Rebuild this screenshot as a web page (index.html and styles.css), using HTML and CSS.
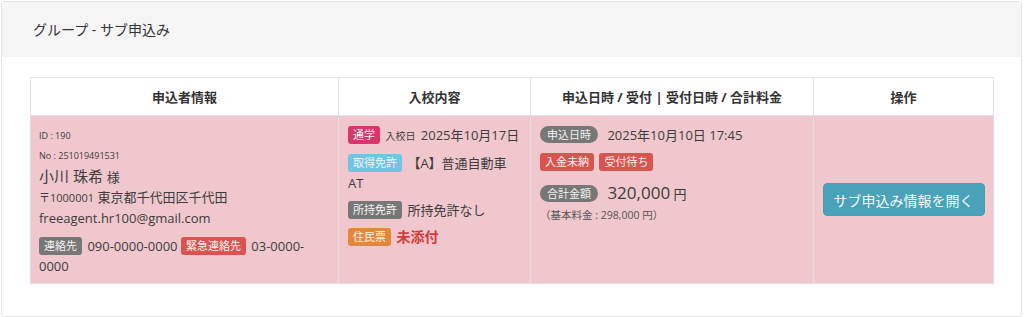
FILE: index.html
```html
<!DOCTYPE html>
<html lang="ja">
<head>
<meta charset="utf-8">
<title>グループ - サブ申込み</title>
<link rel="stylesheet" href="styles.css">
</head>
<body>
<div class="card">
  <div class="card-header">グループ - サブ申込み</div>
  <div class="card-body">
    <table class="apps">
      <colgroup>
        <col class="c1"><col class="c2"><col class="c3"><col class="c4">
      </colgroup>
      <thead>
        <tr>
          <th>申込者情報</th>
          <th>入校内容</th>
          <th>申込日時 / 受付 | 受付日時 / 合計料金</th>
          <th>操作</th>
        </tr>
      </thead>
      <tbody>
        <tr class="row-danger">
          <td class="cell-applicant">
            <div class="meta">ID : 190</div>
            <div class="meta">No : 251019491531</div>
            <div class="name">小川 珠希 <span class="honor">様</span></div>
            <div class="addr"><span class="zip">〒1000001</span> 東京都千代田区千代田</div>
            <div class="email">freeagent.hr100@gmail.com</div>
            <div class="contact"><span class="badge gray">連絡先</span> <span>090-0000-0000</span> <span class="badge red">緊急連絡先</span> <span>03-0000-</span><wbr><span>0000</span></div>
          </td>
          <td class="cell-course">
            <div class="line"><span class="badge pink">通学</span> <span class="small">入校日</span> 2025年10月17日</div>
            <div class="line"><span class="badge info">取得免許</span> <span>【A】普通自動車</span> <span>AT</span></div>
            <div class="line"><span class="badge gray">所持免許</span> 所持免許なし</div>
            <div class="line"><span class="badge orange">住民票</span> <span class="warn">未添付</span></div>
          </td>
          <td class="cell-dates">
            <div class="line"><span class="pill">申込日時</span> 2025年10月10日 17:45</div>
            <div class="line"><span class="badge red">入金未納</span> <span class="badge red">受付待ち</span></div>
            <div class="line total"><span class="pill">合計金額</span> <span class="amount">320,000</span> <span class="yen">円</span></div>
            <div class="base">（基本料金 : 298,000 円）</div>
          </td>
          <td class="cell-action">
            <button class="btn-info" type="button">サブ申込み情報を開く</button>
          </td>
        </tr>
      </tbody>
    </table>
  </div>
</div>
</body>
</html>
```
FILE: styles.css
```css
html, body {
  margin: 0;
  padding: 0;
  background: #ffffff;
}
body {
  padding: 1px 2px 0 1px;
  font-family: "Open Sans", "Noto Sans CJK JP", sans-serif;
  color: #3d3d3d;
}
.card {
  border: 1px solid #e4e4e4;
  border-radius: 3px;
  background: #fff;
  height: 316px;
  box-sizing: border-box;
}
.card-header {
  background: #f5f5f5;
  padding: 17px 31px;
  font-size: 14px;
  line-height: 21px;
  color: #333;
}
.card-body {
  padding: 20px 27px 32px 28px;
}
.apps {
  width: 100%;
  border-collapse: collapse;
  table-layout: fixed;
}
.c1 { width: 308px; }
.c2 { width: 192px; }
.c3 { width: 283px; }
.c4 { width: 180px; }
.apps th, .apps td {
  border: 1px solid #e2e2e2;
}
.apps th {
  height: 38px;
  padding: 0 8px;
  font-size: 13px;
  font-weight: 700;
  color: #333;
  text-align: center;
  vertical-align: middle;
  box-sizing: border-box;
}
.row-danger td {
  background: #efc7cd;
  border-color: #e8dcde;
  vertical-align: top;
  font-size: 13px;
  line-height: 20px;
}
.cell-applicant {
  padding: 10px 8px 7px 8px;
}
.meta {
  font-size: 9px;
  line-height: 20px;
}
.name {
  font-size: 15px;
  line-height: 20px;
}
.honor { font-size: 13px; }
.addr { line-height: 21px; }
.zip { font-size: 11px; }
.contact {
  margin-top: 8px;
  line-height: 20px;
}
.cell-course, .cell-dates {
  padding: 9px 9px 8px 9px;
}
.line {
  margin-bottom: 7px;
}
.badge {
  display: inline-block;
  font-size: 11px;
  line-height: 18px;
  padding: 0 5px;
  border-radius: 3px;
  color: #f4f4f4;
  margin-right: 2px;
  vertical-align: 1px;
}
.gray { background: #777777; }
.red { background: #d9534f; }
.pink { background: #d7366b; }
.info { background: #6fc5e3; }
.orange { background: #e4873b; }
.pill {
  display: inline-block;
  font-size: 11px;
  line-height: 17px;
  padding: 0 7px;
  border-radius: 9px;
  background: #777777;
  color: #f0f0f0;
  margin-right: 6px;
  vertical-align: 1px;
}
.small { font-size: 10px; margin-right: 2px; }
.warn {
  color: #d63a3a;
  font-weight: 700;
  font-size: 14px;
}
.total {
  line-height: 24px;
  margin-top: 9px;
  margin-bottom: 0;
}
.amount { font-size: 17px; }
.yen { font-size: 13px; }
.base {
  font-size: 10.5px;
  line-height: 18px;
  color: #555;
}
.cell-action {
  vertical-align: middle !important;
  text-align: center;
  padding: 8px;
}
.btn-info {
  font-family: "Open Sans", "Noto Sans CJK JP", sans-serif;
  font-size: 14px;
  height: 33px;
  padding: 0 10px;
  white-space: nowrap;
  border: 1px solid #46a0b5;
  border-radius: 4px;
  background: #4aa2b8;
  color: #f3f9fb;
  cursor: pointer;
}
```
